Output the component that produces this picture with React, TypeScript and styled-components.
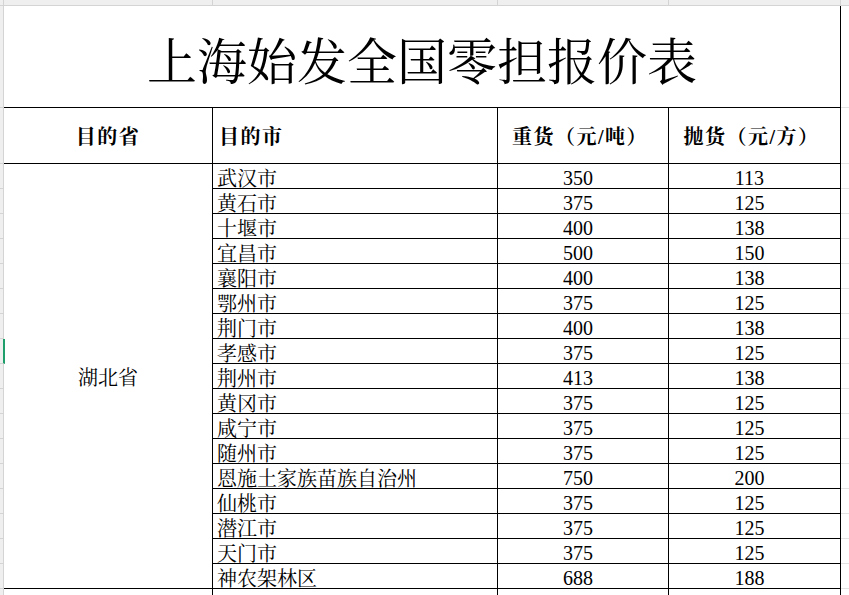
import styled, { createGlobalStyle, css } from "styled-components";

const rows = [
  { city: "武汉市", heavy: 350, light: 113 },
  { city: "黄石市", heavy: 375, light: 125 },
  { city: "十堰市", heavy: 400, light: 138 },
  { city: "宜昌市", heavy: 500, light: 150 },
  { city: "襄阳市", heavy: 400, light: 138 },
  { city: "鄂州市", heavy: 375, light: 125 },
  { city: "荆门市", heavy: 400, light: 138 },
  { city: "孝感市", heavy: 375, light: 125 },
  { city: "荆州市", heavy: 413, light: 138 },
  { city: "黄冈市", heavy: 375, light: 125 },
  { city: "咸宁市", heavy: 375, light: 125 },
  { city: "随州市", heavy: 375, light: 125 },
  { city: "恩施土家族苗族自治州", heavy: 750, light: 200 },
  { city: "仙桃市", heavy: 375, light: 125 },
  { city: "潜江市", heavy: 375, light: 125 },
  { city: "天门市", heavy: 375, light: 125 },
  { city: "神农架林区", heavy: 688, light: 188 },
];

const SELECTED = 7;

export default function App() {
  return (
    <>
      <GlobalStyle />
      <Sheet>
        <Corner />
        <ColHead />
        <ColHead />
        <ColHead />
        <ColHead />
        <ColHead $last />

        <RowHead />
        <Title>上海始发全国零担报价表</Title>
        <Spare />

        <RowHead />
        <Head $align="center">目的省</Head>
        <Head $align="left">目的市</Head>
        <Head $align="shifted">重货（元/吨）</Head>
        <Head $align="shifted">抛货（元/方）</Head>
        <Spare />

        {rows.map((r, i) => (
          <Row key={r.city} index={i} {...r} />
        ))}

        {/* next province starts just below the fold */}
        <RowHead />
        <Province />
        <City />
        <Num />
        <Num />
        <Spare />
      </Sheet>
    </>
  );
}

function Row({ index, city, heavy, light }: { index: number; city: string; heavy: number; light: number }) {
  return (
    <>
      <RowHead $selected={index === SELECTED} />
      {index === 0 && <Province style={{ gridRow: `span ${rows.length}` }}>湖北省</Province>}
      <City>{city}</City>
      <Num>{heavy}</Num>
      <Num>{light}</Num>
      <Spare />
    </>
  );
}

const GlobalStyle = createGlobalStyle`
  html, body {
    margin: 0;
    padding: 0;
    background: #ffffff;
    overflow: hidden;
  }
`;

const font = `"Liberation Serif", "Noto Serif CJK SC", "Noto Sans CJK SC", serif`;

const Sheet = styled.div`
  display: grid;
  grid-template-columns: 4px 209px 285px 171px 172px 1fr;
  grid-template-rows: 6px 102px 56px repeat(18, 25px);
  width: 849px;
  height: 595px;
  overflow: hidden;
  font-family: ${font};
  color: #000;
  background: #fff;
`;

const cell = css`
  box-sizing: border-box;
  border-right: 1px solid #000;
  border-bottom: 1px solid #000;
  display: flex;
  align-items: center;
  overflow: hidden;
  white-space: nowrap;
`;

const Corner = styled.div`
  background: #efefef;
  border-bottom: 1px solid #d4d4d4;
  border-right: 1px solid #d4d4d4;
`;

const ColHead = styled.div<{ $last?: boolean }>`
  background: #efefef;
  border-bottom: 1px solid #d4d4d4;
  border-right: ${(p) => (p.$last ? "none" : "1px solid #d4d4d4")};
`;

const RowHead = styled.div<{ $selected?: boolean }>`
  background: #efefef;
  box-sizing: border-box;
  border-bottom: 1px solid #d4d4d4;
  border-right: ${(p) => (p.$selected ? "2px solid #1e9e6a" : "1px solid #d4d4d4")};
  margin-right: ${(p) => (p.$selected ? "-1px" : "0")};
`;

const Spare = styled.div`
  border-bottom: 1px solid #e2e2e2;
`;

const Title = styled.div`
  ${cell};
  grid-column: span 4;
  justify-content: center;
  font-size: 50px;
  padding-top: 2px;
`;

const Head = styled.div<{ $align: "center" | "left" | "shifted" }>`
  ${cell};
  font-size: 20px;
  font-weight: bold;
  letter-spacing: 1.5px;
  justify-content: ${(p) => (p.$align === "left" ? "flex-start" : "center")};
  padding-left: ${(p) => (p.$align === "left" ? "6px" : "0")};
  padding-right: ${(p) => (p.$align === "shifted" ? "6px" : "0")};
`;

const Province = styled.div`
  ${cell};
  justify-content: center;
  font-size: 20px;
`;

const City = styled.div`
  ${cell};
  font-size: 20px;
  padding-left: 4px;
  padding-top: 3px;
`;

const Num = styled.div`
  ${cell};
  justify-content: center;
  font-size: 20px;
  padding-right: 10px;
  padding-top: 4px;
`;
